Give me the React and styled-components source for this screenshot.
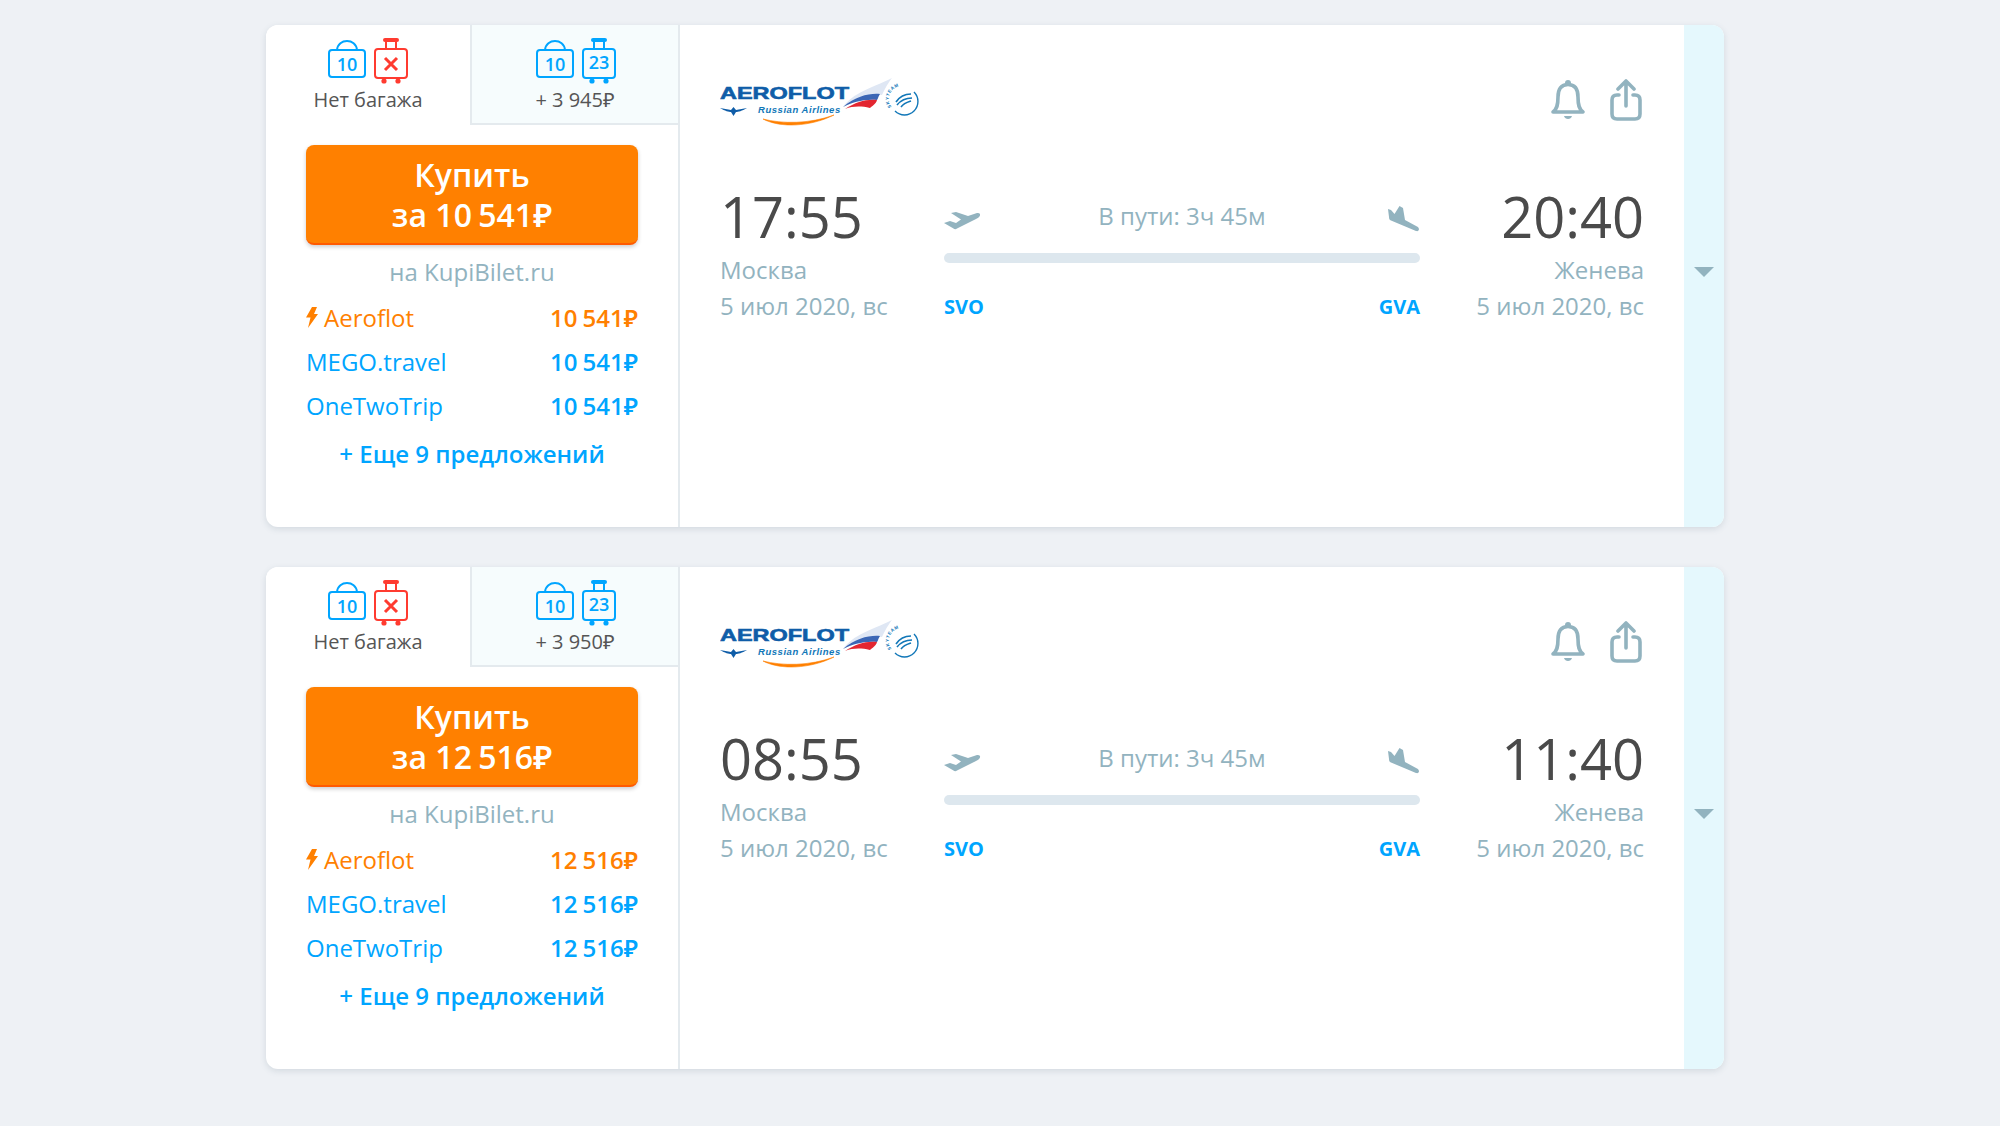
import React from "react";
import styled, { createGlobalStyle } from "styled-components";

const GlobalStyle = createGlobalStyle`
  html, body {
    margin: 0;
    background: #eef1f5;
    font-family: "Open Sans", "Noto Sans", sans-serif;
  }
`;

const BLUE = "#00a5ff";
const RED = "#ff3b30";
const ORANGE = "#ff8000";
const GREY = "#92b3bf";

const flights = [
  { extra: "+ 3 945₽", price: "10 541", from: "17:55", to: "20:40" },
  { extra: "+ 3 950₽", price: "12 516", from: "08:55", to: "11:40" },
];

const sellers = [
  { name: "Aeroflot", accent: true },
  { name: "MEGO.travel" },
  { name: "OneTwoTrip" },
];

function Bag({ label = "10" }) {
  return (
    <svg width="38" height="40" viewBox="0 0 38 40" fill="none">
      <path d="M9 12C10 0 28 0 29 12" stroke={BLUE} strokeWidth="2" />
      <rect x="1" y="12" width="36" height="27" rx="3" stroke={BLUE} strokeWidth="2" />
      <text x="19" y="33" textAnchor="middle" fontSize="18" fontWeight="600" fontFamily="Open Sans" fill={BLUE}>
        {label}
      </text>
    </svg>
  );
}

function Suitcase({ color, children }) {
  return (
    <svg width="34" height="46" viewBox="0 0 34 46" fill="none">
      <path d="M11 2H23" stroke={color} strokeWidth="4" strokeLinecap="round" />
      <path d="M12 3V11M22 3V11" stroke={color} strokeWidth="2" />
      <rect x="1" y="11" width="32" height="29" rx="3" stroke={color} strokeWidth="2" />
      <circle cx="10" cy="43" r="2.6" fill={color} />
      <circle cx="24" cy="43" r="2.6" fill={color} />
      {children}
    </svg>
  );
}

function BellIcon() {
  return (
    <svg width="36" height="42" viewBox="0 0 36 42" fill="none">
      <circle cx="18" cy="4" r="3" fill={GREY} />
      <path
        d="M3 33C7 30 8 26 8 18C8 10 11 5.500 18 5.500C25 5.500 28 10 28 18C28 26 29 30 33 33Z"
        stroke={GREY}
        strokeWidth="3.6"
        strokeLinejoin="round"
      />
      <path d="M14 37H22C21 41 15 41 14 37Z" fill={GREY} />
    </svg>
  );
}

function ShareIcon() {
  return (
    <svg width="32" height="42" viewBox="0 0 32 42" fill="none" stroke={GREY} strokeWidth="3.6" strokeLinecap="round" strokeLinejoin="round">
      <path d="M9 16H7C3.500 16 2 17.500 2 21V35C2 38.500 3.500 40 7 40H25C28.500 40 30 38.500 30 35V21C30 17.500 28.500 16 25 16H23" />
      <path d="M16 27V3M8 10L16 2L24 10" />
    </svg>
  );
}

function TakeoffIcon() {
  return (
    <svg width="37" height="18" viewBox="0 0 37 18">
      <path
        fill={GREY}
        d="M0 11L6 9L12 11L17 7.500L7 1L12 0L24 4L33 1C35.500 0.500 36.500 2 36 3.500C35.500 5 34 6 32 7L13 16.500C12 17.500 10.500 17.500 9.500 16.500Z"
      />
    </svg>
  );
}

function LandingIcon() {
  return (
    <svg width="32" height="26" viewBox="0 0 32 26">
      <path
        fill={GREY}
        d="M0 3L3 4L6.500 8L11.500 0L15 2L17 14L29 20.500C32 22 31.500 26 28 25L3 14.500C1.500 14 1 13 1 11Z"
      />
    </svg>
  );
}

function BoltIcon() {
  return (
    <svg width="12" height="21" viewBox="0 0 12 21">
      <path fill={ORANGE} d="M6 0H11L8 7H12L2 21L4.500 10.500H0Z" />
    </svg>
  );
}

function AeroflotLogo() {
  return (
    <svg width="200" height="50" viewBox="0 0 200 50">
      <defs>
        <path id="skyteam-arc" d="M171.500 29A12.500 12.500 0 0 1 192 13" />
      </defs>
      <text x="0" y="21" fontFamily="Liberation Sans" fontWeight="700" fontSize="17" textLength="129" lengthAdjust="spacingAndGlyphs" fill="#0f5da8" stroke="#0f5da8" strokeWidth="0.6">
        AEROFLOT
      </text>
      <path d="M0 30L11 32L13.500 29L16 32L27 30C22 33 18 34 16 34L13.500 38L11 34C9 34 5 33 0 30Z" fill="#0f5da8" />
      <text x="38" y="35" fontFamily="Liberation Sans" fontStyle="italic" fontWeight="700" fontSize="9.500" letterSpacing="0.8" textLength="83" fill="#1177b8">
        Russian Airlines
      </text>
      <path d="M43 41C60 50 90 49 114 37C90 46 62 46 43 41Z" fill={ORANGE} stroke={ORANGE} strokeWidth="0.6" />
      <path d="M123 29C134 14 150 11 172 0C166 8 164 13 162 17C148 16 134 20 123 29Z" fill="#dfe7f4" />
      <path d="M123 29C136 18 150 15 160 16C158 19 158 21 157 22C144 21 133 24 123 29Z" fill="#3b66b5" />
      <path d="M125 31C136 24 146 21 157 22C156 26 152 28 150 30C141 28 133 28 125 31Z" fill="#e32630" />
      <text fontFamily="Liberation Sans" fontWeight="700" fontSize="4.500" letterSpacing="0.6" fill="#1177b8">
        <textPath href="#skyteam-arc">SKYTEAM</textPath>
      </text>
      <path d="M194 14A12.500 12.500 0 0 1 175 33" fill="none" stroke="#1177b8" strokeWidth="1.400" />
      <path d="M176 24C180 18 186 16 191 16M177 27C181 22 187 20 192 20M181 29C184 25 188 24 191 23" fill="none" stroke="#1177b8" strokeWidth="1.600" />
    </svg>
  );
}

export default function App() {
  return (
    <Page>
      <GlobalStyle />
      {flights.map((f) => (
        <Card key={f.from}>
          <BuyColumn>
            <Tabs>
              <Tab $active>
                <Icons>
                  <Bag />
                  <Suitcase color={RED}>
                    <path d="M11 20L23 32M23 20L11 32" stroke={RED} strokeWidth="3" />
                  </Suitcase>
                </Icons>
                <TabLabel>Нет багажа</TabLabel>
              </Tab>
              <Tab>
                <Icons $shift>
                  <Bag />
                  <Suitcase color={BLUE}>
                    <text x="17" y="31" textAnchor="middle" fontSize="18" fontWeight="600" fontFamily="Open Sans" fill={BLUE}>
                      23
                    </text>
                  </Suitcase>
                </Icons>
                <TabLabel>{f.extra}</TabLabel>
              </Tab>
            </Tabs>
            <BuyBody>
              <BuyButton>
                Купить
                <br />
                за <ButtonAmount>{f.price}₽</ButtonAmount>
              </BuyButton>
              <Via>на KupiBilet.ru</Via>
              {sellers.map((s) => (
                <SellerRow key={s.name} $accent={s.accent}>
                  <SellerName>
                    {s.accent && <BoltIcon />}
                    {s.name}
                  </SellerName>
                  <SellerPrice>{f.price}₽</SellerPrice>
                </SellerRow>
              ))}
              <MoreLink>+ Еще 9 предложений</MoreLink>
            </BuyBody>
          </BuyColumn>

          <Details>
            <TopRow>
              <AeroflotLogo />
              <Actions>
                <BellIcon />
                <ShareIcon />
              </Actions>
            </TopRow>
            <Route>
              <Point>
                <Time>{f.from}</Time>
                <City>Москва</City>
                <DateText>5 июл 2020, вс</DateText>
              </Point>
              <Path>
                <PathTop>
                  <PlaneSlot $offset={12}>
                    <TakeoffIcon />
                  </PlaneSlot>
                  <Duration>В пути: 3ч 45м</Duration>
                  <PlaneSlot $offset={7} $end>
                    <LandingIcon />
                  </PlaneSlot>
                </PathTop>
                <Bar />
                <Codes>
                  <span>SVO</span>
                  <span>GVA</span>
                </Codes>
              </Path>
              <Point $right>
                <Time>{f.to}</Time>
                <City>Женева</City>
                <DateText>5 июл 2020, вс</DateText>
              </Point>
            </Route>
          </Details>

          <Expand>
            <Arrow />
          </Expand>
        </Card>
      ))}
    </Page>
  );
}

const Page = styled.div`
  min-height: 1126px;
  box-sizing: border-box;
  padding: 25px 0 0 266px;
  display: flex;
  flex-direction: column;
  gap: 40px;
`;

const Card = styled.div`
  width: 1458px;
  height: 502px;
  display: flex;
  background: #fff;
  border-radius: 12px;
  overflow: hidden;
  box-shadow: 0 2px 6px rgba(90, 110, 130, 0.18);
`;

const BuyColumn = styled.div`
  width: 412px;
  flex: none;
  border-right: 2px solid #e4eaee;
  display: flex;
  flex-direction: column;
`;

const Tabs = styled.div`
  display: flex;
  height: 100px;
`;

const Tab = styled.div`
  width: ${(p) => (p.$active ? "204px" : "208px")};
  box-sizing: border-box;
  display: flex;
  flex-direction: column;
  align-items: center;
  padding-top: 13px;
  background: ${(p) => (p.$active ? "#fff" : "#f6fcfd")};
  ${(p) => !p.$active && "border-left: 2px solid #e4eaee; border-bottom: 2px solid #e4eaee;"}
`;

const Icons = styled.div`
  display: flex;
  align-items: flex-start;
  gap: 8px;
  height: 46px;
  ${(p) => p.$shift && "margin-left: 2px;"}
`;

const TabLabel = styled.div`
  margin-top: 2px;
  font-size: 20px;
  line-height: 28px;
  color: #555;
`;

const BuyBody = styled.div`
  display: flex;
  flex-direction: column;
  padding: 20px 40px 0;
`;

const BuyButton = styled.button`
  width: 100%;
  height: 100px;
  padding: 2px 0 0;
  border: none;
  border-bottom: 2px solid #ff5a00;
  border-radius: 8px;
  background: ${ORANGE};
  box-shadow: 0 2px 4px rgba(0, 0, 0, 0.2);
  color: #fff;
  font-family: inherit;
  font-size: 32px;
  font-weight: 600;
  line-height: 40px;
`;

const ButtonAmount = styled.span`
  word-spacing: -2px;
`;

const Via = styled.div`
  margin: 5px 0 1px;
  text-align: center;
  font-size: 24px;
  line-height: 44px;
  color: ${GREY};
`;

const SellerRow = styled.div`
  display: flex;
  justify-content: space-between;
  align-items: center;
  height: 44px;
  font-size: 24px;
  color: ${(p) => (p.$accent ? ORANGE : BLUE)};
`;

const SellerName = styled.span`
  display: flex;
  align-items: center;
  gap: 6px;
`;

const SellerPrice = styled.span`
  font-weight: 600;
  word-spacing: -1px;
`;

const MoreLink = styled.div`
  margin-top: 5px;
  text-align: center;
  font-size: 24px;
  line-height: 44px;
  font-weight: 600;
  color: ${BLUE};
`;

const Details = styled.div`
  flex: 1;
  padding: 53px 40px 0 40px;
`;

const TopRow = styled.div`
  display: flex;
  justify-content: space-between;
  align-items: flex-start;
  height: 50px;
`;

const Actions = styled.div`
  display: flex;
  gap: 24px;
  margin-top: 1px;
  padding-right: 2px;
`;

const Route = styled.div`
  margin-top: 54px;
  display: grid;
  grid-template-columns: 224px 476px 224px;
`;

const Point = styled.div`
  display: flex;
  flex-direction: column;
  align-items: ${(p) => (p.$right ? "flex-end" : "flex-start")};
  color: ${GREY};
  font-size: 24px;
`;

const Time = styled.div`
  font-size: 56px;
  line-height: 68px;
  margin-bottom: 2px;
  color: #4a4a4a;
`;

const City = styled.div`
  line-height: 36px;
`;

const DateText = styled.div`
  line-height: 36px;
`;

const Path = styled.div`
  display: flex;
  flex-direction: column;
`;

const PathTop = styled.div`
  display: grid;
  grid-template-columns: 1fr auto 1fr;
  align-items: center;
  height: 50px;
  margin-top: 8px;
`;

const PlaneSlot = styled.div`
  display: flex;
  margin-top: ${(p) => p.$offset}px;
  ${(p) => p.$end && "justify-content: flex-end;"}
`;

const Duration = styled.div`
  font-size: 24px;
  color: ${GREY};
`;

const Bar = styled.div`
  height: 10px;
  margin-top: 13px;
  border-radius: 5px;
  background: #dde7ee;
`;

const Codes = styled.div`
  display: flex;
  justify-content: space-between;
  margin-top: 32px;
  font-size: 20px;
  line-height: 24px;
  font-weight: 700;
  color: ${BLUE};
`;

const Expand = styled.div`
  width: 40px;
  flex: none;
  background: #e5f8fd;
  padding-top: 242px;
  display: flex;
  justify-content: center;
`;

const Arrow = styled.div`
  width: 0;
  height: 0;
  border-left: 10px solid transparent;
  border-right: 10px solid transparent;
  border-top: 10px solid ${GREY};
`;
